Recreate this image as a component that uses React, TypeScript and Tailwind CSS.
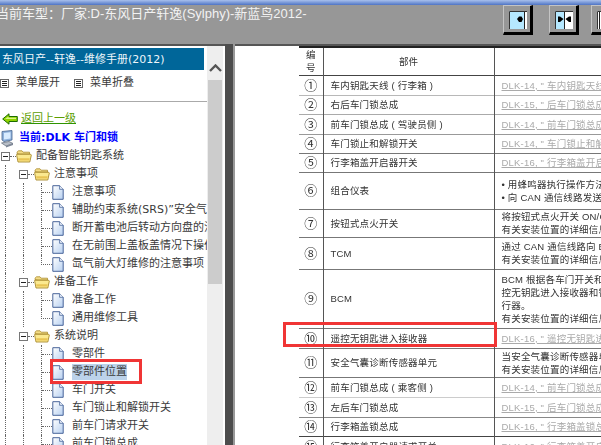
const CJK = "font-['Liberation_Sans','Noto_Sans_CJK_SC',sans-serif]";
const TREE_FONT = "font-['DejaVu_Sans','Noto_Sans_CJK_SC',sans-serif]";

type TreeRow = {
  kind: 'root' | 'folder' | 'leaf';
  label: string;
  last?: boolean;
  selected?: boolean;
};

const TREE: TreeRow[] = [
  { kind: 'root', label: '配备智能钥匙系统' },
  { kind: 'folder', label: '注意事项' },
  { kind: 'leaf', label: '注意事项' },
  { kind: 'leaf', label: '辅助约束系统(SRS)”安全气囊”和“安全带' },
  { kind: 'leaf', label: '断开蓄电池后转动方向盘的注意事项' },
  { kind: 'leaf', label: '在无前围上盖板盖情况下操作的注意事项' },
  { kind: 'leaf', label: '氙气前大灯维修的注意事项', last: true },
  { kind: 'folder', label: '准备工作' },
  { kind: 'leaf', label: '准备工作' },
  { kind: 'leaf', label: '通用维修工具', last: true },
  { kind: 'folder', label: '系统说明' },
  { kind: 'leaf', label: '零部件' },
  { kind: 'leaf', label: '零部件位置', selected: true },
  { kind: 'leaf', label: '车门开关' },
  { kind: 'leaf', label: '车门锁止和解锁开关' },
  { kind: 'leaf', label: '前车门请求开关' },
  { kind: 'leaf', label: '前车门锁总成' },
];

type PartRow = {
  no: string;
  name: string;
  link?: string;
  lines?: string[];
  h: string;
  line: string;
};

const PARTS: PartRow[] = [
  { no: '①', name: '车内钥匙天线 ( 行李箱 )', link: 'DLK-14, " 车内钥匙天线 "', h: 'h-[20px]', line: 'border-b-[#b8b8b8]' },
  { no: '②', name: '右后车门锁总成', link: 'DLK-15, " 后车门锁总成 "', h: 'h-[19px]', line: 'border-b-[#aaaaaa]' },
  { no: '③', name: '前车门锁总成 ( 驾驶员侧 )', link: 'DLK-14, " 前车门锁总成 "', h: 'h-[20px]', line: 'border-b-[#999999]' },
  { no: '④', name: '车门锁止和解锁开关', link: 'DLK-14, " 车门锁止和解锁开关 "', h: 'h-[19px]', line: 'border-b-[#777777]' },
  { no: '⑤', name: '行李箱盖开启器开关', link: 'DLK-16, " 行李箱盖开启器开关 "', h: 'h-[19px]', line: 'border-b-[#777777]' },
  { no: '⑥', name: '组合仪表', lines: ['• 用蜂鸣器执行操作方法', '• 向 CAN 通信线路发送'], h: 'h-[37px]', line: 'border-b-[#777777]' },
  { no: '⑦', name: '按钮式点火开关', lines: ['将按钮式点火开关 ON/OFF', '有关安装位置的详细信息'], h: 'h-[28px]', line: 'border-b-[#777777]' },
  { no: '⑧', name: 'TCM', lines: ['通过 CAN 通信线路向 BCM', '有关安装位置的详细信息'], h: 'h-[32px]', line: 'border-b-[#777777]' },
  { no: '⑨', name: 'BCM', lines: ['BCM 根据各车门开关和', '控无钥匙进入接收器和智', '行器。', '有关安装位置的详细信息'], h: 'h-[59px]', line: 'border-b-[#777777]' },
  { no: '⑩', name: '遥控无钥匙进入接收器', link: 'DLK-16, " 遥控无钥匙进入 "', h: 'h-[20px]', line: 'border-b-[#777777]' },
  { no: '⑪', name: '安全气囊诊断传感器单元', lines: ['当安全气囊诊断传感器单', '有关安装位置的详细信息'], h: 'h-[29px]', line: 'border-b-[#777777]' },
  { no: '⑫', name: '前车门锁总成 ( 乘客侧 )', link: 'DLK-14, " 前车门锁总成 "', h: 'h-[20px]', line: 'border-b-[#cccccc]' },
  { no: '⑬', name: '左后车门锁总成', link: 'DLK-15, " 后车门锁总成 "', h: 'h-[20px]', line: 'border-b-[#888888]' },
  { no: '⑭', name: '行李箱盖锁总成', link: 'DLK-16, " 行李箱盖锁总成 "', h: 'h-[19px]', line: 'border-b-[#444444]' },
  { no: '⑮', name: '行李箱盖开启器请求开关', link: 'DLK-16, " 行李箱盖开启器 "', h: 'h-[20px]', line: 'border-b-[#777777]' },
];

function ListIcon() {
  return (
    <svg width="9" height="9" viewBox="0 0 9 9" className="shrink-0">
      <rect x="0.5" y="0.5" width="8" height="8" fill="#fff" stroke="#666" />
      <path d="M2 2.5h5M2 4.5h5M2 6.5h5" stroke="#222" />
    </svg>
  );
}

function BackArrow() {
  return (
    <svg width="16" height="12" viewBox="0 0 16 12" className="shrink-0">
      <path d="M0.7 6L7 0.8V3.5H15.3V8.5H7V11.2Z" fill="#8fd400" stroke="#1c6b00" />
      <path d="M3 6L6.5 3.5V4.8H14V6H3Z" fill="#d9f58a" />
    </svg>
  );
}

function PcIcon() {
  return (
    <svg width="13" height="18" viewBox="0 0 13 18" className="shrink-0">
      <path d="M1 1.5L11 0.5V10L3 11.5L1 10Z" fill="#8fb2dc" stroke="#48648e" strokeWidth="0.8" />
      <path d="M3 3L9.5 2.2V8.5L3 9.4Z" fill="#d8ecff" />
      <path d="M0.5 13L8 11.5L12 13.5L5 16Z" fill="#b9bfc8" stroke="#6d7684" strokeWidth="0.8" />
      <path d="M5 16L12 13.5V15L5 17.5Z" fill="#7c8595" />
    </svg>
  );
}

function FolderIcon() {
  return (
    <svg width="16" height="13" viewBox="0 0 16 13" className="shrink-0">
      <path d="M1 3.5V2.2L2.5 0.8H6L7.2 2.2H13.5V4H4Z" fill="#f4dc86" stroke="#a98a2c" strokeWidth="0.8" />
      <path d="M0.7 4.3H14.8L15.3 5.2L13.8 12H2L0.7 5.2Z" fill="#fbe98f" stroke="#a98a2c" strokeWidth="0.9" />
      <path d="M2.6 10.4H13.2L13.7 8.2H2.2Z" fill="#e9c455" />
    </svg>
  );
}

function DocIcon() {
  return (
    <svg width="12" height="15" viewBox="0 0 12 15" className="shrink-0">
      <defs>
        <linearGradient id="docFill" x1="0" y1="0" x2="1" y2="1">
          <stop offset="0" stopColor="#ffffff" />
          <stop offset="1" stopColor="#b7d0f0" />
        </linearGradient>
      </defs>
      <path d="M0.8 0.7H7.6L11.2 4.3V14.3H0.8Z" fill="url(#docFill)" stroke="#35558f" strokeWidth="0.9" />
      <path d="M7.6 0.7V4.3H11.2" fill="#eef4fc" stroke="#35558f" strokeWidth="0.7" />
    </svg>
  );
}

function MinusBox() {
  return (
    <span className="flex h-[9px] w-[9px] shrink-0 items-center justify-center border border-[#777] bg-white">
      <span className="h-px w-[5px] bg-[#222]" />
    </span>
  );
}

function Guide() {
  return (
    <span className="h-[18px] w-[18px] shrink-0 pl-[5px]">
      <span className="block h-full border-l border-dotted border-[#666]" />
    </span>
  );
}

function BoxCell() {
  return (
    <span className="flex h-[18px] w-[16px] shrink-0 items-center pl-px">
      <MinusBox />
      <span className="flex-1 border-t border-dotted border-[#666]" />
    </span>
  );
}

function Row({ row }: { row: TreeRow }) {
  if (row.kind === 'root') {
    return (
      <div className="flex h-[18px] items-center">
        <BoxCell />
        <FolderIcon />
        <span className="ml-[4px] whitespace-nowrap">{row.label}</span>
      </div>
    );
  }
  if (row.kind === 'folder') {
    return (
      <div className="flex h-[18px] items-center">
        <Guide />
        <BoxCell />
        <FolderIcon />
        <span className="ml-[4px] whitespace-nowrap">{row.label}</span>
      </div>
    );
  }
  return (
    <div className="flex h-[18px] items-center">
      <Guide />
      <Guide />
      <span className="h-[18px] w-[16px] shrink-0 pl-[5px]">
        {row.last ? (
          <span className="block h-[10px] border-b border-l border-dotted border-[#666]" />
        ) : (
          <span className="block h-full border-l border-dotted border-[#666]">
            <span className="block h-[10px] border-b border-dotted border-[#666]" />
          </span>
        )}
      </span>
      <DocIcon />
      <span className={`ml-[8px] whitespace-nowrap ${row.selected ? 'bg-[#bcd2ea]' : ''}`}>{row.label}</span>
    </div>
  );
}

function ToolButton({ children }: { children: React.ReactNode }) {
  return (
    <div className="h-[30px] w-[30px] shrink-0 border-t-[1px] border-r-[3px] border-b-[3px] border-l-[1px] border-t-[#c4c4c4] border-r-[#000] border-b-[#000] border-l-[#c4c4c4] bg-[#979797] pt-[5px] pl-[5px]">
      {children}
    </div>
  );
}

function LeftArrowPane() {
  return (
    <svg width="18" height="18" viewBox="0 0 18 18">
      <rect x="0" y="0" width="18" height="18" fill="#b5e8ff" />
      <path d="M0.5 18V0.5H18" fill="none" stroke="#333" />
      <rect x="16" y="1" width="2" height="17" fill="#fff" />
      <path d="M15.5 1v17" stroke="#222" />
      <path d="M8 8L10 5.5H12.5L14 8L12.5 11H10Z" fill="#000" />
    </svg>
  );
}

function BothArrowPane() {
  return (
    <svg width="18" height="18" viewBox="0 0 18 18">
      <rect x="0" y="0" width="9" height="18" fill="#b5e8ff" />
      <rect x="9" y="0" width="9" height="18" fill="#fff" />
      <path d="M0.5 18V0.5H18" fill="none" stroke="#333" />
      <path d="M9.5 1v17" stroke="#222" />
      <path d="M3 5.5H5L8.5 8L5 11H3Z M16 5.5V11H14L10.5 8L14 5.5Z" fill="#000" />
    </svg>
  );
}

function WhiteArrowPane() {
  return (
    <svg width="18" height="18" viewBox="0 0 18 18">
      <rect x="0" y="0" width="18" height="18" fill="#fff" />
      <path d="M0.5 18V0.5H18" fill="none" stroke="#333" />
      <path d="M2.5 1v17" stroke="#222" />
      <path d="M4 8L7 5.5H9V11H7Z" fill="#000" />
    </svg>
  );
}

export default function App() {
  return (
    <div className={`relative flex h-[445px] w-[601px] flex-col overflow-hidden bg-white ${CJK}`}>
      <div className="h-[5px] shrink-0 bg-gradient-to-b from-[#a9c0ec] to-[#4f74c4]" />

      <header className="flex h-[41px] shrink-0 items-start justify-between border-b-2 border-[#555] bg-[#979797]">
        <div className="-ml-[4px] whitespace-nowrap text-[13px] leading-[18px] text-[#f2f2f2]">
          当前车型：厂家:D-东风日产轩逸(Sylphy)-新蓝鸟2012-
        </div>
        <div className="flex w-[98px] shrink-0 gap-[16px]">
          <ToolButton>
            <LeftArrowPane />
          </ToolButton>
          <ToolButton>
            <BothArrowPane />
          </ToolButton>
          <div className="-ml-[4px] -mr-[20px]">
            <ToolButton>
              <WhiteArrowPane />
            </ToolButton>
          </div>
        </div>
      </header>

      <div className="flex min-h-0 flex-1">
        <aside className={`w-[207px] shrink-0 overflow-hidden pt-[2px] text-[11px] text-[#3a3a3a] ${TREE_FONT}`}>
          <div className="flex h-[22px] w-[204px] items-center whitespace-nowrap bg-[#006699] pl-[2px] leading-none text-[#eef6fb]">
            东风日产--轩逸--维修手册(2012)
          </div>
          <div className="flex h-[32px] items-start gap-[8px] border-b border-[#aaa] pt-[5px]">
            <div className="flex items-center gap-[7px]">
              <ListIcon />
              <span>菜单展开</span>
            </div>
            <div className="ml-[6px] flex items-center gap-[7px]">
              <ListIcon />
              <span>菜单折叠</span>
            </div>
          </div>
          <div className="mt-[8px] flex h-[18px] items-center gap-[3px] pl-[2px]">
            <BackArrow />
            <span className="text-[#5c9e00] underline decoration-[#2f9400]">返回上一级</span>
          </div>
          <div className="mt-[2px] flex h-[17px] items-center gap-[5px] pl-px font-bold text-[#0000ff]">
            <PcIcon />
            <span className="whitespace-nowrap">当前:DLK 车门和锁</span>
          </div>
          {TREE.map((row, i) => (
            <Row key={i} row={row} />
          ))}
        </aside>

        <div className="w-[16px] shrink-0 bg-[#eeeeee] px-px">
          <div className="flex h-[34px] items-start justify-center pt-[18px]">
            <svg width="13" height="8" viewBox="0 0 13 8">
              <path d="M1 7L6.5 1.5L12 7" fill="none" stroke="#555" strokeWidth="2.4" />
            </svg>
          </div>
          <div className="h-[204px] bg-[#cccccc]" />
        </div>

        <div className="w-[2px] shrink-0 bg-white" />
        <div className="-mt-[2px] w-[8px] shrink-0 bg-[#4d4d4d]" />
        <div className="-mt-[2px] w-[2px] shrink-0 bg-[#999]" />

        <main className="min-w-0 flex-1 overflow-hidden pl-[64px]">
          <table className="w-[400px] table-fixed border-collapse border-t-2 border-[#222] text-[9.5px] leading-[13px] text-[#333] blur-[0.3px]">
            <colgroup>
              <col className="w-[24px]" />
              <col className="w-[171px]" />
              <col />
            </colgroup>
            <thead>
              <tr className="h-[28px] border-b border-[#444]">
                <th className="border-r border-[#555] text-center text-[9.5px] font-normal leading-[13px]">
                  编<br />号
                </th>
                <th className="border-r border-[#555] text-center font-normal">部件</th>
                <th />
              </tr>
            </thead>
            <tbody>
              {PARTS.map((p) => (
                <tr key={p.no} className={`${p.h} border-b ${p.line}`}>
                  <td className="border-r border-r-[#555] p-0 text-center text-[13px] leading-none">{p.no}</td>
                  <td className="whitespace-nowrap border-r border-r-[#555] p-0 pl-[7px] tracking-[0.2px]">{p.name}</td>
                  <td className="overflow-hidden whitespace-nowrap p-0 pl-[7px] tracking-[0.2px]">
                    {p.link && <span className="text-[#aaaaaa] underline">{p.link}</span>}
                    {p.lines?.map((l) => (
                      <div key={l}>{l}</div>
                    ))}
                  </td>
                </tr>
              ))}
            </tbody>
          </table>
        </main>
      </div>

      <div className="absolute left-[50px] top-[359px] h-[25px] w-[92px] border-[3px] border-[#f03535]" />
      <div className="absolute left-[283px] top-[322px] h-[25px] w-[214px] border-[3px] border-[#f03535]" />
    </div>
  );
}
